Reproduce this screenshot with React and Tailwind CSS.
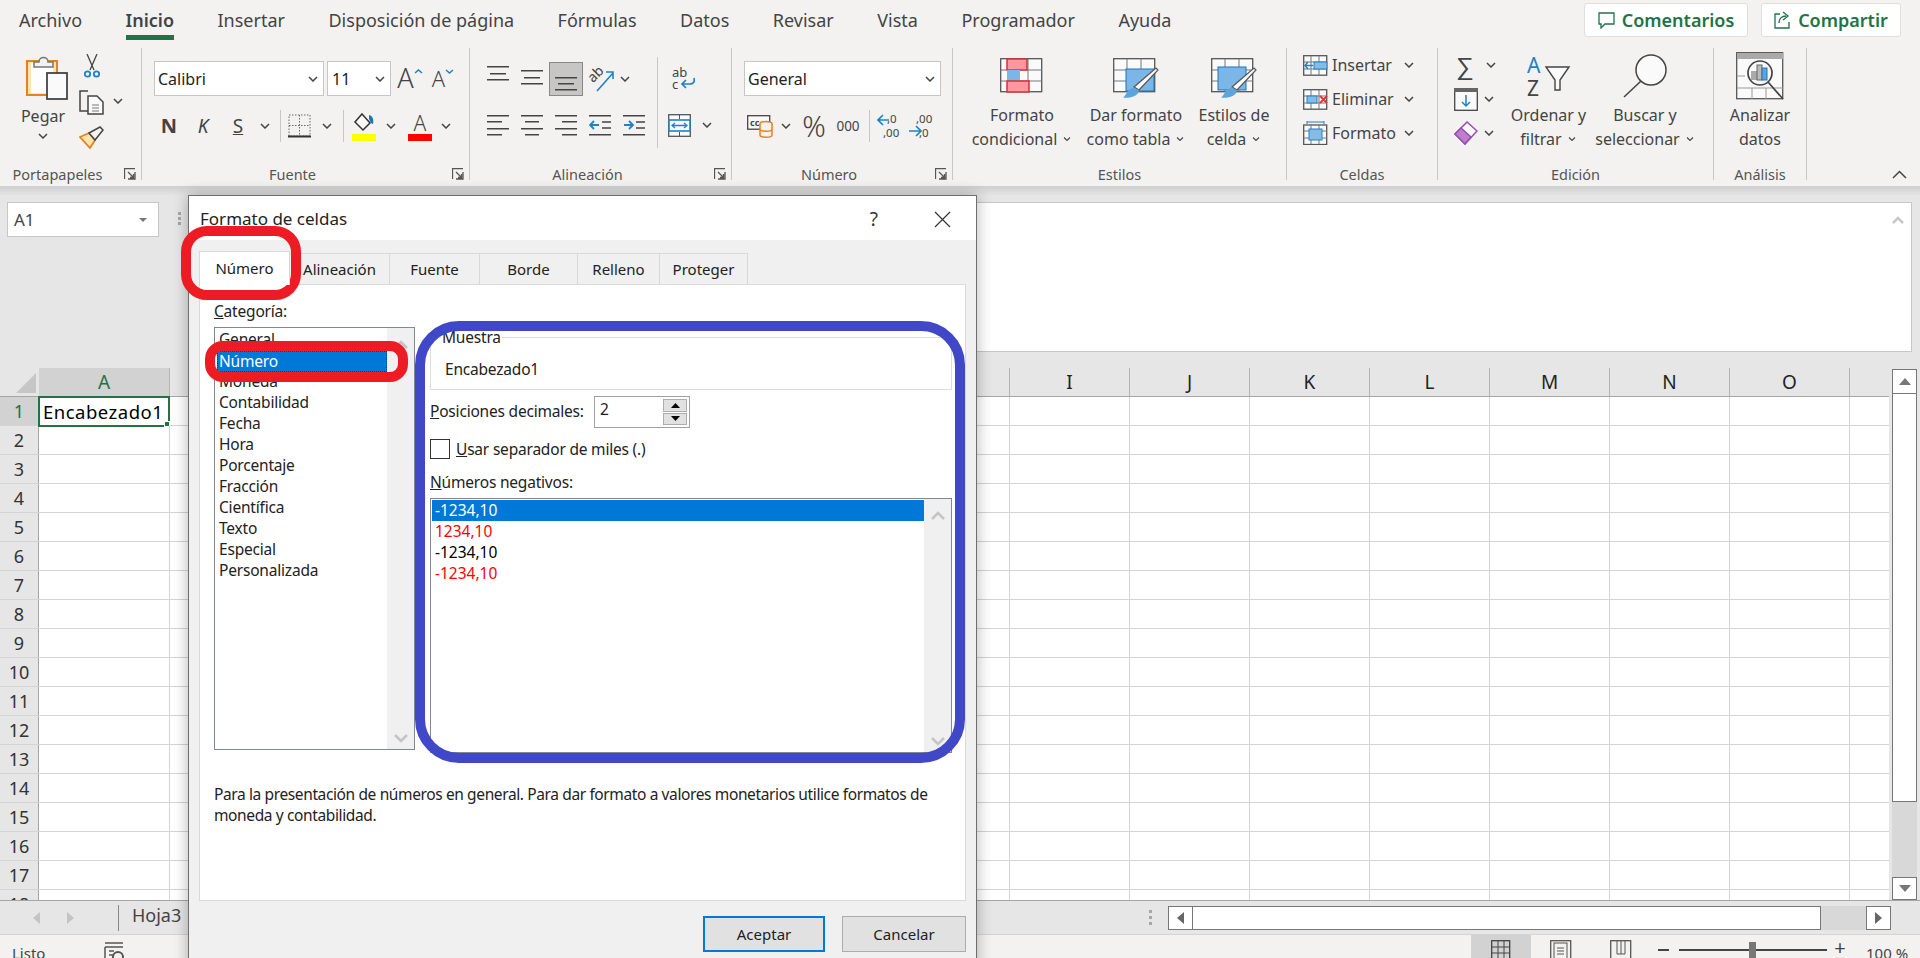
import React from 'react';

const Chev = ({ className = '' }) => (
  <svg width="10" height="6" viewBox="0 0 10 6" className={className}><path d="M1 1l4 4 4-4" fill="none" stroke="#444" strokeWidth="1.5" /></svg>
);

const Launcher = ({ className = '' }) => (
  <svg width="12" height="12" viewBox="0 0 12 12" className={`absolute ${className}`}>
    <path d="M.5 11V.5H11M11 4v7H4M4 4l5.5 5.5M9.5 6v3.500H6" fill="none" stroke="#555" strokeWidth="1.300" />
  </svg>
);

const Lines = ({ rows, w = 22, h = 34, color = '#444' }) => (
  <svg width={w} height={h} viewBox={`0 0 ${w} ${h}`}>
    {rows.map((r, i) => <rect key={i} x={r[0]} y={r[2]} width={r[1] - r[0]} height="1.500" fill={color} />)}
  </svg>
);

const Paste = () => (
  <svg width="42" height="46" viewBox="0 0 42 46">
    <rect x="1" y="7" width="30" height="34" fill="#fce4b0" stroke="#e8811a" strokeWidth="2" />
    <rect x="5" y="9" width="22" height="30" fill="#fdfdfd" />
    <path d="M8 13V8h5c0-6 9-6 9 0h5v5z" fill="#f2f2f2" stroke="#777" strokeWidth="1.500" />
    <rect x="21" y="19" width="20" height="26" fill="#fafafa" stroke="#444" strokeWidth="1.800" />
  </svg>
);

const Scissors = () => (
  <svg width="16" height="25" viewBox="0 0 16 25">
    <path d="M3 0l7 16M13 0L6 16" stroke="#444" strokeWidth="1.300" fill="none" />
    <circle cx="3.500" cy="20" r="2.700" fill="none" stroke="#1c84c6" strokeWidth="1.800" />
    <circle cx="12.500" cy="20" r="2.700" fill="none" stroke="#1c84c6" strokeWidth="1.800" />
  </svg>
);

const Copy = () => (
  <svg width="25" height="25" viewBox="0 0 25 25">
    <path d="M9 1H1v20h8" fill="none" stroke="#444" strokeWidth="1.500" />
    <path d="M9 6h9l6 6v12H9z" fill="#fafafa" stroke="#444" strokeWidth="1.500" />
    <path d="M13 15h7M13 18h7M13 21h7" stroke="#777" strokeWidth="1.200" />
  </svg>
);

const Brush = () => (
  <svg width="25" height="23" viewBox="0 0 25 23">
    <path d="M1 11l9-4 6 7-5 8z" fill="#fce4b0" stroke="#e8811a" strokeWidth="1.800" />
    <path d="M10 7l6 7 8-10-3-3z" fill="#f3f2f1" stroke="#444" strokeWidth="1.500" />
  </svg>
);

const BorderIcon = () => (
  <svg width="24" height="24" viewBox="0 0 24 24">
    <rect x="1" y="1" width="21" height="21" fill="none" stroke="#666" strokeWidth="1" strokeDasharray="1.500 1.500" />
    <path d="M11.500 1v21M1 11.500h21" stroke="#666" strokeWidth="1" strokeDasharray="1.500 1.500" />
    <rect x="0" y="21.500" width="23" height="2" fill="#333" />
  </svg>
);

const FillIcon = () => (
  <svg width="26" height="29" viewBox="0 0 26 29">
    <path d="M11 2l8 9-7 7-8-8z" fill="#fafafa" stroke="#333" strokeWidth="1.500" />
    <path d="M18 3c4 1 5 5 4 9-2 0-3-3-4-5z" fill="#1c74b8" />
    <rect x="1" y="22" width="24" height="7" fill="#ffff00" />
  </svg>
);

const Orientation = () => (
  <svg width="26" height="25" viewBox="0 0 26 25">
    <text x="0" y="13" fontSize="14" fill="#444" transform="rotate(-45 6 10)" fontFamily="Noto Sans">ab</text>
    <path d="M8 24L24 6M17 5h7v7" fill="none" stroke="#1c84c6" strokeWidth="1.600" />
  </svg>
);

const Indent = ({ right }) => (
  <svg width="22" height="21" viewBox="0 0 22 21">
    <rect y="0" width="22" height="1.500" fill="#444" />
    <rect y="19" width="22" height="1.500" fill="#444" />
    <path d="M13 7h9M13 13h9" stroke="#444" strokeWidth="1.500" />
    <path d={right ? 'M1 10h9M6 6l4 4-4 4' : 'M10 10H1M5 6l-4 4 4 4'} fill="none" stroke="#1c84c6" strokeWidth="1.800" />
  </svg>
);

const Wrap = () => (
  <svg width="23" height="24" viewBox="0 0 23 24">
    <text x="0" y="10" fontSize="13" fill="#444" fontFamily="Noto Sans">ab</text>
    <text x="0" y="22" fontSize="13" fill="#444" fontFamily="Noto Sans">c</text>
    <path d="M22 11c1 4-1 6-4 6H10M14 13l-4 4 4 4" fill="none" stroke="#1c84c6" strokeWidth="1.700" />
  </svg>
);

const Merge = () => (
  <svg width="23" height="23" viewBox="0 0 23 23">
    <rect x=".7" y=".7" width="21.600" height="21.600" fill="#fafafa" stroke="#555" strokeWidth="1.300" />
    <path d="M11.500 0v5M11.500 18v5" stroke="#555" />
    <rect x="1" y="6" width="21" height="11" fill="#fafafa" stroke="#1c84c6" strokeWidth="1.600" />
    <path d="M4 11.500h15M7 9l-3 2.500L7 14M16 9l3 2.500-3 2.500" fill="none" stroke="#1c84c6" strokeWidth="1.300" />
  </svg>
);

const Currency = () => (
  <svg width="26" height="24" viewBox="0 0 26 24">
    <rect x=".7" y="1.700" width="22" height="13.500" fill="#fafafa" stroke="#444" strokeWidth="1.300" />
    <text x="3" y="12" fontSize="9" fontWeight="700" fill="#444" fontFamily="Noto Sans">cc</text>
    <ellipse cx="19" cy="10" rx="6" ry="2.500" fill="#f3f2f1" stroke="#e8811a" strokeWidth="1.500" />
    <path d="M13 10v11c0 3 12 3 12 0V10M13 15c0 3 12 3 12 0" fill="#f3f2f1" stroke="#e8811a" strokeWidth="1.500" />
  </svg>
);

const Decimal = ({ more }) => (
  <svg width="24" height="26" viewBox="0 0 24 26">
    <text x={more ? 7 : 10} y="10" fontSize="11.500" fill="#444" fontFamily="Noto Sans">{more ? ',00' : ',0'}</text>
    <text x={more ? 10 : 6} y="24" fontSize="11.500" fill="#444" fontFamily="Noto Sans">{more ? ',0' : ',00'}</text>
    <path d={more ? 'M0 18h11M7 13l5 5-5 5' : 'M12 7H1M6 2L1 7l5 5'} fill="none" stroke="#1c84c6" strokeWidth="1.700" />
  </svg>
);

const StyleGrid = ({ children, w = 44 }) => (
  <svg width={w} height="40" viewBox={`0 0 ${w} 40`}>
    <rect x=".7" y=".7" width="41" height="33" fill="#fafafa" stroke="#555" strokeWidth="1.300" />
    <path d="M14 1v33M28 1v33M1 12h41M1 23h41" stroke="#777" strokeWidth="1" />
    {children}
  </svg>
);

const Pencil = () => (
  <g>
    <path d="M21 29L43 10l2 2-19 20z" fill="#fafafa" stroke="#555" strokeWidth="1.200" />
    <path d="M10 39.500c3-1 3-8 11-10l5 3c-1 6-9 8-16 7z" fill="#5ea4dc" />
  </g>
);

const Insertar = () => (
  <svg width="25" height="21" viewBox="0 0 25 21">
    <rect x=".7" y=".7" width="23" height="19.500" fill="#fafafa" stroke="#555" strokeWidth="1.300" />
    <path d="M8 1v19M16 1v19M1 7h23M1 14h23" stroke="#777" />
    <rect x="11" y="7" width="13" height="7" fill="#86bbe8" stroke="#1c84c6" />
    <path d="M10 10.500H2M5 7l-3 3.500L5 14" fill="none" stroke="#1c84c6" strokeWidth="1.500" />
  </svg>
);

const Eliminar = () => (
  <svg width="25" height="21" viewBox="0 0 25 21">
    <rect x=".7" y=".7" width="23" height="19.500" fill="#fafafa" stroke="#555" strokeWidth="1.300" />
    <path d="M8 1v19M16 1v19M1 7h23M1 14h23" stroke="#777" />
    <rect x="4" y="7" width="10" height="7" fill="#86bbe8" stroke="#1c84c6" />
    <path d="M17 7l7 7M24 7l-7 7" stroke="#e8303a" strokeWidth="1.800" />
  </svg>
);

const Formato = () => (
  <svg width="25" height="24" viewBox="0 0 25 24">
    <path d="M4 1h17M4 0v3M21 0v3" stroke="#1c84c6" />
    <rect x=".7" y="4" width="23" height="19.500" fill="#fafafa" stroke="#555" strokeWidth="1.300" />
    <path d="M8 4v19M16 4v19M1 10h23M1 17h23" stroke="#777" />
    <rect x="6" y="8" width="13" height="11" fill="#86bbe8" stroke="#1c84c6" />
  </svg>
);

const SortIcon = () => (
  <svg width="44" height="42" viewBox="0 0 44 42">
    <text x="0" y="18" fontSize="21" fill="#1c84c6" fontFamily="Noto Sans">A</text>
    <text x="0" y="41" fontSize="21" fill="#444" fontFamily="Noto Sans">Z</text>
    <path d="M19 12h23l-9 13v10h-5V25z" fill="#fafafa" stroke="#444" strokeWidth="1.400" />
  </svg>
);

const SearchIcon = () => (
  <svg width="44" height="44" viewBox="0 0 44 44">
    <circle cx="28" cy="16" r="15" fill="#fafafa" stroke="#444" strokeWidth="1.500" />
    <path d="M18 27L1 43" stroke="#444" strokeWidth="1.500" />
  </svg>
);

const AnalyzeIcon = () => (
  <svg width="48" height="48" viewBox="0 0 48 48">
    <rect x=".7" y=".7" width="46" height="46" fill="#fafafa" stroke="#555" strokeWidth="1.300" />
    <rect x="1" y="1" width="46" height="6" fill="#aaa" />
    <path d="M1 24h8M1 36h46M16 36v11M30 36v11" stroke="#999" />
    <circle cx="24" cy="21" r="12" fill="#fafafa" stroke="#444" strokeWidth="1.700" />
    <rect x="15" y="19" width="6" height="9" fill="#aaa" />
    <rect x="21" y="13" width="5" height="15" fill="#bbb" stroke="#666" />
    <rect x="26" y="16" width="5" height="12" fill="#5ea4dc" stroke="#1c74b8" />
    <path d="M32 30l15 17" stroke="#444" strokeWidth="1.700" />
  </svg>
);

const Group = ({ width, label, launcher, children, noBorder }) => (
  <div className={`relative flex h-[132px] shrink-0 flex-col ${noBorder ? '' : 'border-r border-[#c8c6c4]'}`} style={{ width }}>
    <div className="h-[117px] shrink-0 overflow-hidden">{children}</div>
    <div className={`h-[18px] shrink-0 text-center text-[14.5px] leading-[18px] text-[#555] ${launcher ? 'pr-[26px]' : ''}`}>{label}</div>
    {launcher && <Launcher className="right-[5px] bottom-[0px]" />}
  </div>
);

const Cell = ({ w, children, className = '' }) => (
  <div className={`flex h-[34px] shrink-0 items-center justify-center ${className}`} style={{ width: w }}>{children}</div>
);

const VSep = () => <div className="mx-auto h-[32px] w-px bg-[#c8c6c4]" />;

const Select = ({ w, label, pad = 'pl-[3px]' }) => (
  <div className={`flex h-[35px] shrink-0 items-center justify-between border border-[#c8c6c4] bg-white pr-[5px] text-[16px] text-[#222] ${pad}`} style={{ width: w }}>
    <span>{label}</span>
    <Chev />
  </div>
);

const BigButton = ({ w, icon, lines, top = 'pt-[10px]' }) => (
  <div className="flex shrink-0 flex-col items-center" style={{ width: w }}>
    <div className={`flex h-[55px] items-start justify-center ${top}`}>{icon}</div>
    <div className="text-center text-[16px] leading-[24px] whitespace-nowrap text-[#444]">
      {lines.map((l, i) => (
        <div key={i} className="flex items-center justify-center gap-[5px]">
          <span>{l.replace(' *', '')}</span>
          {l.endsWith(' *') && <Chev className="scale-75" />}
        </div>
      ))}
    </div>
  </div>
);

const CellRow = ({ icon, label }) => (
  <div className="flex h-[34px] items-center text-[16px] text-[#444]">
    <div className="flex w-[29px] shrink-0 items-center">{icon}</div>
    <span className="w-[72px]">{label}</span>
    <Chev />
  </div>
);

const Ribbon = () => (
  <div className="flex h-[146px] shrink-0 items-start bg-[#f3f2f1] pt-[8px]">
    <Group width={142} label="Portapapeles" launcher>
      <div className="flex pl-[8px]">
        <div className="flex w-[70px] flex-col pt-[6px]">
          <div className="pl-[18px]"><Paste /></div>
          <div className="mt-[4px] w-[70px] text-center text-[16px] leading-[24px] text-[#444]">Pegar</div>
          <div className="flex h-[16px] w-[70px] items-center justify-center"><Chev /></div>
        </div>
        <div className="flex flex-col pl-[1px]">
          <div className="flex h-[31px] items-end pl-[5px]"><Scissors /></div>
          <div className="flex h-[36px] items-end gap-[9px]"><Copy /><Chev className="mb-[11px]" /></div>
          <div className="flex h-[34px] items-end"><Brush /></div>
        </div>
      </div>
    </Group>
    <Group width={328} label="Fuente" launcher>
      <div className="pt-[13px] pl-[12px]">
        <div className="flex items-center">
          <Select w={170} label="Calibri" />
          <div className="w-[3px]" />
          <Select w={64} label="11" pad="pl-[4px]" />
          <div className="flex h-[35px] w-[36px] items-start justify-center pl-[2px] text-[27px] leading-[33px] font-light text-[#444]">
            A
            <svg width="9" height="5" viewBox="0 0 9 5" className="mt-[8px]"><path d="M1 4l3.500-3L8 4" fill="none" stroke="#1c84c6" strokeWidth="1.500" /></svg>
          </div>
          <div className="flex h-[35px] w-[32px] items-start justify-center text-[22px] leading-[35px] font-light text-[#444]">
            A
            <svg width="9" height="5" viewBox="0 0 9 5" className="mt-[8px]"><path d="M1 1l3.500 3L8 1" fill="none" stroke="#1c84c6" strokeWidth="1.500" /></svg>
          </div>
        </div>
        <div className="mt-[13px] -ml-[2px] flex items-center text-[#444]">
          <Cell w={34} className="text-[20px] font-bold">N</Cell>
          <Cell w={34} className="text-[19px] italic">K</Cell>
          <Cell w={36} className="text-[19px] underline">S</Cell>
          <Cell w={17}><Chev /></Cell>
          <Cell w={14}><VSep /></Cell>
          <Cell w={26}><BorderIcon /></Cell>
          <Cell w={5} />
          <Cell w={18}><Chev /></Cell>
          <Cell w={14}><VSep /></Cell>
          <Cell w={28}><FillIcon /></Cell>
          <Cell w={25}><Chev /></Cell>
          <Cell w={34}>
            <div className="flex flex-col items-center">
              <span className="text-[21px] leading-[22px] font-light">A</span>
              <div className="h-[7px] w-[24px] bg-[#ff0000]" />
            </div>
          </Cell>
          <Cell w={18}><Chev /></Cell>
        </div>
      </div>
    </Group>
    <Group width={262} label="Alineación" launcher>
      <div className="flex pt-[14px] pl-[11px]">
        <div className="w-[176px]">
          <div className="flex items-start">
            <Cell w={34}><Lines rows={[[0, 22, 4], [3, 19, 11], [0, 22, 17]]} /></Cell>
            <Cell w={34}><Lines rows={[[0, 22, 8], [3, 19, 15], [0, 22, 21]]} /></Cell>
            <Cell w={34} className="border border-[#8a8886] bg-[#c8c6c4]"><Lines rows={[[0, 22, 15], [3, 19, 21], [0, 22, 27]]} /></Cell>
            <Cell w={38}><Orientation /></Cell>
            <Cell w={10} className="-ml-[1px]"><Chev /></Cell>
          </div>
          <div className="mt-[12px] flex items-center">
            <Cell w={34}><Lines rows={[[0, 22, 7], [0, 15, 13], [0, 22, 20], [0, 15, 26]]} /></Cell>
            <Cell w={34}><Lines rows={[[0, 22, 7], [4, 18, 13], [0, 22, 20], [4, 18, 26]]} /></Cell>
            <Cell w={34}><Lines rows={[[0, 22, 7], [7, 22, 13], [0, 22, 20], [7, 22, 26]]} /></Cell>
            <Cell w={34}><Indent /></Cell>
            <Cell w={34}><Indent right /></Cell>
          </div>
        </div>
        <div className="-mt-[5px] h-[91px] w-px bg-[#c8c6c4]" />
        <div className="flex flex-col pl-[10px]">
          <div className="flex h-[34px] items-center pl-[4px]"><Wrap /></div>
          <div className="mt-[12px] flex h-[34px] items-center gap-[11px]"><Merge /><Chev /></div>
        </div>
      </div>
    </Group>
    <Group width={221} label="Número" launcher>
      <div className="pt-[13px] pl-[12px]">
        <Select w={197} label="General" />
        <div className="mt-[13px] flex items-center">
          <Cell w={31}><Currency /></Cell>
          <Cell w={22}><Chev /></Cell>
          <Cell w={34} className="text-[29px] font-light text-[#444]">%</Cell>
          <Cell w={34} className="text-[13.500px] text-[#444]">000</Cell>
          <Cell w={9}><VSep /></Cell>
          <Cell w={30}><Decimal /></Cell>
          <Cell w={33}><Decimal more /></Cell>
        </div>
      </div>
    </Group>
    <Group width={334} label="Estilos">
      <div className="flex pl-[17px]">
        <BigButton w={104} icon={<StyleGrid><rect x="7" y="1" width="20" height="11" fill="#ff97a0" stroke="#d13438" strokeWidth="1.500" /><rect x="7" y="12" width="13" height="11" fill="#7cb6e6" /><rect x="7" y="23" width="22" height="11" fill="#ff97a0" stroke="#d13438" strokeWidth="1.500" /></StyleGrid>} lines={['Formato', 'condicional *']} />
        <BigButton w={124} icon={<StyleGrid w={46}><rect x="13" y="11" width="28" height="22" fill="#7cb6e6" stroke="#1c74b8" /><Pencil /></StyleGrid>} lines={['Dar formato', 'como tabla *']} />
        <BigButton w={72} icon={<StyleGrid w={46}><rect x="7" y="9" width="28" height="23" fill="#7cb6e6" stroke="#1c74b8" /><Pencil /></StyleGrid>} lines={['Estilos de', 'celda *']} />
      </div>
    </Group>
    <Group width={151} label="Celdas">
      <div className="flex flex-col pl-[16px]">
        <CellRow icon={<Insertar />} label="Insertar" />
        <CellRow icon={<Eliminar />} label="Eliminar" />
        <CellRow icon={<Formato />} label="Formato" />
      </div>
    </Group>
    <Group width={276} label="Edición">
      <div className="flex">
        <div className="flex w-[68px] shrink-0 flex-col pl-[16px]">
          <div className="flex h-[34px] items-center gap-[12px] pl-[2px] text-[25px] leading-none text-[#444]"><span className="w-[18px]">∑</span><Chev /></div>
          <div className="flex h-[34px] items-center gap-[6px]">
            <svg width="24" height="23" viewBox="0 0 24 23"><rect x=".7" y=".7" width="22.600" height="21.600" fill="#fafafa" stroke="#444" strokeWidth="1.300" /><rect y="0" width="24" height="4" fill="#666" /><path d="M12 7v11M8 14l4 4 4-4" fill="none" stroke="#1c84c6" strokeWidth="1.500" /></svg>
            <Chev />
          </div>
          <div className="flex h-[34px] items-center gap-[6px]">
            <svg width="24" height="24" viewBox="0 0 24 24"><path d="M1 13L13 1l10 9-12 13z" fill="#fafafa" stroke="#9a4bb0" strokeWidth="1.500" /><path d="M1 13l6-6 10 9-6 7z" fill="#bb7fcc" stroke="#9a4bb0" strokeWidth="1.500" /></svg>
            <Chev />
          </div>
        </div>
        <BigButton w={85} icon={<SortIcon />} lines={['Ordenar y', 'filtrar *']} top="pt-[7px]" />
        <BigButton w={108} icon={<SearchIcon />} lines={['Buscar y', 'seleccionar *']} top="pt-[6px]" />
      </div>
    </Group>
    <Group width={93} label="Análisis">
      <BigButton w={92} icon={<AnalyzeIcon />} lines={['Analizar', 'datos']} top="pt-[4px]" />
    </Group>
    <div className="flex h-[132px] flex-1 items-end justify-end pr-[13px] pb-[1px]">
      <svg width="15" height="9" viewBox="0 0 15 9"><path d="M1 8l6.500-6.500L14 8" fill="none" stroke="#444" strokeWidth="1.500" /></svg>
    </div>
  </div>
);

const COLS = ['A', 'B', 'C', 'D', 'E', 'F', 'G', 'H', 'I', 'J', 'K', 'L', 'M', 'N', 'O'];
const ROWS = Array.from({ length: 18 }, (_, i) => i + 1);

const Sheet = () => (
  <div className="flex h-[532px] shrink-0 bg-[#e6e6e6]">
    <div className="flex w-[1889px] flex-col overflow-hidden">
      <div className="flex h-[28px] shrink-0">
        <div className="flex h-[28px] w-[39px] shrink-0 items-end justify-end pr-[3px] pb-[3px]">
          <svg width="20" height="20" viewBox="0 0 20 20"><path d="M20 0v20H0z" fill="#c6c6c6" /></svg>
        </div>
        {COLS.map((c, i) => (
          <div key={c} className={`flex shrink-0 items-center justify-center border-r border-[#b4b4b4] text-[19px] ${i === 0 ? 'w-[131px] bg-[#d2d2d2] text-[#217346]' : 'w-[120px] text-[#222]'}`}>{c}</div>
        ))}
      </div>
      <div className="flex-1 border-t border-[#a6a6a6]">
        {ROWS.map((r) => (
          <div key={r} className="flex h-[29px] shrink-0 border-b border-[#d4d4d4]">
            <div className={`flex w-[39px] shrink-0 items-center justify-center border-r border-[#a6a6a6] text-[18px] ${r === 1 ? 'bg-[#d2d2d2] text-[#217346]' : 'bg-[#e6e6e6] text-[#333]'}`}>{r}</div>
            <div className="flex flex-1 bg-white">
              {COLS.map((c, i) => (
                <div key={c} className={`relative shrink-0 border-r border-[#d4d4d4] ${i === 0 ? 'w-[131px]' : 'w-[120px]'}`}>
                  {r === 1 && i === 0 && (
                    <div className="absolute -top-[1px] -left-[1px] flex h-[31px] w-[132px] items-center border-2 border-[#217346] pl-[3px] text-[18.500px] tracking-[0.5px] text-black">
                      Encabezado1
                      <div className="absolute -right-[2px] -bottom-[2px] h-[6px] w-[6px] border border-white bg-[#217346]" />
                    </div>
                  )}
                </div>
              ))}
            </div>
          </div>
        ))}
      </div>
    </div>
    <div className="ml-[3px] flex w-[25px] flex-col pt-[1px]">
      <div className="flex h-[25px] items-center justify-center border border-[#777] bg-white">
        <svg width="12" height="7" viewBox="0 0 12 7"><path d="M6 0l6 7H0z" fill="#777" /></svg>
      </div>
      <div className="h-[409px] border-x border-b border-[#777] bg-white" />
      <div className="h-[75px] bg-[#d8d8d8]" />
      <div className="flex h-[23px] items-center justify-center border border-[#777] bg-white">
        <svg width="12" height="7" viewBox="0 0 12 7"><path d="M6 7l6-7H0z" fill="#777" /></svg>
      </div>
    </div>
  </div>
);

const SheetBar = () => (
  <div className="flex h-[34px] shrink-0 items-center border-t border-[#a6a6a6] bg-[#e6e6e6]">
    <div className="flex w-[118px] items-center justify-center gap-[27px] pr-[12px]">
      <svg width="7" height="12" viewBox="0 0 7 12"><path d="M7 0L0 6l7 6z" fill="#c4c4c4" /></svg>
      <svg width="7" height="12" viewBox="0 0 7 12"><path d="M0 0l7 6-7 6z" fill="#c4c4c4" /></svg>
    </div>
    <div className="h-[26px] w-px bg-[#888]" />
    <div className="pb-[4px] pl-[13px] text-[18px] text-[#444]">Hoja3</div>
    <div className="flex-1" />
    <div className="mr-[16px] flex flex-col gap-[3px]">
      <div className="h-[3px] w-[3px] bg-[#a6a6a6]" /><div className="h-[3px] w-[3px] bg-[#a6a6a6]" /><div className="h-[3px] w-[3px] bg-[#a6a6a6]" />
    </div>
    <div className="flex h-[24px] w-[723px] items-stretch">
      <div className="flex w-[25px] items-center justify-center border border-[#777] bg-white">
        <svg width="7" height="12" viewBox="0 0 7 12"><path d="M7 0L0 6l7 6z" fill="#666" /></svg>
      </div>
      <div className="w-[628px] border-y border-r border-[#777] bg-white" />
      <div className="w-[45px] bg-[#d8d8d8]" />
      <div className="flex w-[25px] items-center justify-center border border-[#777] bg-white">
        <svg width="7" height="12" viewBox="0 0 7 12"><path d="M0 0l7 6-7 6z" fill="#666" /></svg>
      </div>
    </div>
    <div className="w-[29px]" />
  </div>
);

const StatusBar = () => (
  <div className="flex h-[24px] shrink-0 items-start overflow-hidden border-t border-[#d4d4d4] bg-[#f3f2f1] text-[#444]">
    <div className="w-[104px] pt-[7px] pl-[12px] text-[15px] leading-[22px]">Listo</div>
    <div className="pt-[7px]">
      <svg width="22" height="24" viewBox="0 0 22 24"><path d="M1 1h18M1 5h18M1 5v14M5 9h5M5 13h5" stroke="#555" strokeWidth="1.500" fill="none" /><circle cx="14" cy="15" r="5" fill="none" stroke="#555" strokeWidth="2" /></svg>
    </div>
    <div className="flex-1" />
    <div className="flex h-[24px] w-[60px] items-start justify-center bg-[#d2d2d2] pt-[5px]">
      <svg width="20" height="24" viewBox="0 0 20 24"><rect x=".7" y=".7" width="18" height="22" fill="none" stroke="#444" strokeWidth="1.300" /><path d="M7 1v22M13 1v22M1 7h18M1 13h18" stroke="#444" /></svg>
    </div>
    <div className="flex h-[24px] w-[60px] items-start justify-center pt-[5px]">
      <svg width="22" height="24" viewBox="0 0 22 24"><rect x=".7" y=".7" width="20" height="22" fill="none" stroke="#555" strokeWidth="1.300" /><rect x="4" y="3" width="13" height="20" fill="none" stroke="#555" /><path d="M7 8h7M7 11h7M7 14h7" stroke="#555" /></svg>
    </div>
    <div className="flex h-[24px] w-[60px] items-start justify-center pt-[5px]">
      <svg width="22" height="24" viewBox="0 0 22 24"><rect x=".7" y=".7" width="20" height="22" fill="none" stroke="#555" strokeWidth="1.300" /><path d="M7 1v13h4V1M11 14h4V1" fill="none" stroke="#555" /></svg>
    </div>
    <div className="ml-[7px] flex h-[24px] items-start pt-[14px]">
      <div className="h-[1.500px] w-[11px] bg-[#444]" />
    </div>
    <div className="relative ml-[10px] flex h-[24px] w-[148px] items-start pt-[14px]">
      <div className="h-[2px] w-full bg-[#444]" />
      <div className="absolute top-[7px] left-[70px] h-[17px] w-[7px] bg-[#777]" />
    </div>
    <div className="ml-[7px] w-[12px] pt-[1px] text-center text-[20px] leading-[24px]">+</div>
    <div className="ml-[20px] w-[54px] pt-[7px] text-[15px] leading-[22px]">100 %</div>
  </div>
);

const TABS = ['Alineación', 'Fuente', 'Borde', 'Relleno', 'Proteger'];
const TAB_W = ['w-[100px]', 'w-[90px]', 'w-[98px]', 'w-[82px]', 'w-[88px]'];
const CATEGORIES = ['General', 'Número', 'Moneda', 'Contabilidad', 'Fecha', 'Hora', 'Porcentaje', 'Fracción', 'Científica', 'Texto', 'Especial', 'Personalizada'];
const NEG = [['-1234,10', 'text-white bg-[#0078d7]'], ['1234,10', 'text-[#ff0000]'], ['-1234,10', 'text-black'], ['-1234,10', 'text-[#ff0000]']];

const ScrollCol = ({ w }) => (
  <div className={`flex h-full shrink-0 flex-col items-center justify-between bg-[#f0f0f0] pt-[12px] pb-[6px] ${w}`}>
    <svg width="14" height="9" viewBox="0 0 14 9"><path d="M1 8l6-6 6 6" fill="none" stroke="#c4c4c4" strokeWidth="2.500" /></svg>
    <svg width="14" height="9" viewBox="0 0 14 9"><path d="M1 1l6 6 6-6" fill="none" stroke="#c4c4c4" strokeWidth="2.500" /></svg>
  </div>
);

const Dialog = () => (
  <div className="absolute top-[195px] left-[188px] flex h-[800px] w-[789px] flex-col border border-[#6e6e6e] bg-[#f0f0f0] shadow-[0_0_14px_rgba(0,0,0,0.3)]">
    <div className="flex h-[44px] shrink-0 items-center bg-white pt-[2px] pl-[11px] text-[17px] text-[#222]">
      <span className="flex-1">Formato de celdas</span>
      <span className="mr-[56px] text-[19px] text-[#333]">?</span>
      <svg width="17" height="17" viewBox="0 0 17 17" className="mr-[25px]"><path d="M1 1l15 15M16 1L1 16" stroke="#333" strokeWidth="1.200" /></svg>
    </div>
    <div className="flex h-[44px] shrink-0 items-end pl-[10px] text-[15px] text-[#222]">
      <div className="z-10 -mb-px flex h-[34px] w-[91px] items-center justify-center border-x border-t border-[#d9d9d9] bg-white">Número</div>
      {TABS.map((t, i) => (
        <div key={t} className={`flex h-[31px] items-center justify-center border-t border-r border-[#d9d9d9] bg-[#f0f0f0] ${TAB_W[i]}`}>{t}</div>
      ))}
    </div>
    <div className="mx-[10px] flex h-[617px] w-[767px] shrink-0 flex-col border border-[#d9d9d9] bg-white pl-[14px] text-[15.500px] tracking-[-0.2px] text-[#222]">
      <div className="flex h-[468px] shrink-0">
        <div className="w-[201px] shrink-0 pt-[17px]">
          <div className="h-[25px] leading-[18px]"><span className="underline">C</span>ategoría:</div>
          <div className="flex h-[423px] border border-[#828790]">
            <div className="flex-1 pt-[2px] pl-[2px] leading-[19px]">
              {CATEGORIES.map((c, i) => (
                <div key={c} className={`h-[21px] ${i === 1 ? 'border border-dotted border-[#333] bg-[#0078d7] pl-px text-white' : 'pl-[2px]'}`}>{c}</div>
              ))}
            </div>
            <ScrollCol w="w-[27px]" />
          </div>
        </div>
        <div className="ml-[15px] flex w-[522px] shrink-0 flex-col pt-[52px]">
          <div className="relative flex h-[53px] shrink-0 items-center border border-[#dcdcdc] pt-[12px] pl-[14px]">
            <span className="absolute -top-[11px] left-[10px] bg-white px-px leading-[20px]">Muestra</span>
            Encabezado1
          </div>
          <div className="mt-[6px] flex h-[32px] shrink-0 items-center">
            <span className="w-[164px] pb-[1px]"><span className="underline">P</span>osiciones decimales:</span>
            <div className="flex h-[32px] w-[96px] justify-between border border-[#a0a0a0] py-[2px] pr-[2px] pl-[5px]">
              <span className="leading-[20px]">2</span>
              <div className="flex w-[24px] flex-col gap-[1px]">
                <div className="flex h-[13px] items-center justify-center border border-[#adadad] bg-[#e1e1e1]"><svg width="9" height="5" viewBox="0 0 9 5"><path d="M4.500 0L9 5H0z" fill="#000" /></svg></div>
                <div className="flex h-[13px] items-center justify-center border border-[#adadad] bg-[#e1e1e1]"><svg width="9" height="5" viewBox="0 0 9 5"><path d="M4.500 5L9 0H0z" fill="#000" /></svg></div>
              </div>
            </div>
          </div>
          <div className="mt-[11px] flex h-[20px] shrink-0 items-center">
            <div className="h-[20px] w-[20px] border border-[#333]" />
            <span className="ml-[6px] pt-[1px]"><span className="underline">U</span>sar separador de miles (.)</span>
          </div>
          <div className="mt-[14px] h-[25px] shrink-0 leading-[18px]"><span className="underline">N</span>úmeros negativos:</div>
          <div className="flex h-[255px] shrink-0 border border-[#828790]">
            <div className="flex-1 pt-px pl-px leading-[20px] tracking-normal">
              {NEG.map(([t, c], i) => <div key={i} className={`h-[21px] pl-[3px] ${c}`}>{t}</div>)}
            </div>
            <ScrollCol w="w-[27px]" />
          </div>
        </div>
      </div>
      <div className="mt-[31px] leading-[21px] tracking-[-0.38px]">
        Para la presentación de números en general. Para dar formato a valores monetarios utilice formatos de<br />moneda y contabilidad.
      </div>
    </div>
    <div className="mt-[15px] ml-[514px] flex gap-[17px] text-[15px] text-[#222]">
      <div className="flex h-[36px] w-[122px] items-center justify-center border-2 border-[#0078d7] bg-[#e1e1e1]">Aceptar</div>
      <div className="flex h-[36px] w-[124px] items-center justify-center border border-[#adadad] bg-[#e1e1e1]">Cancelar</div>
    </div>
  </div>
);

export default function App() {
  return (
    <div className="relative flex h-[958px] w-[1920px] flex-col overflow-hidden bg-[#e6e6e6] font-['Noto_Sans',sans-serif]">
      {/* Menu tabs */}
      <div className="flex h-[40px] shrink-0 items-start bg-[#f3f2f1] pl-[19px] text-[18px] text-[#444]">
        <div className="flex h-[40px] items-center gap-[43.500px]">
          <span>Archivo</span>
          <span className="relative flex h-[40px] items-center font-semibold">Inicio<span className="absolute right-0 bottom-0 left-0 h-[5px] bg-[#217346]" /></span>
          <span>Insertar</span>
          <span>Disposición de página</span>
          <span>Fórmulas</span>
          <span>Datos</span>
          <span>Revisar</span>
          <span>Vista</span>
          <span>Programador</span>
          <span>Ayuda</span>
        </div>
        <div className="flex-1" />
        <div className="flex gap-[13px] pt-[3px] pr-[19px] text-[18px] font-semibold text-[#217346]">
          <div className="flex h-[34px] w-[164px] items-center justify-center gap-[7px] rounded-[3px] border border-[#e1dfdd] bg-white">
            <svg width="17" height="17" viewBox="0 0 17 17"><path d="M1 1h15v11H7l-4 4v-4H1z" fill="none" stroke="#217346" strokeWidth="1.300" /></svg>
            Comentarios
          </div>
          <div className="flex h-[34px] w-[140px] items-center justify-center gap-[7px] rounded-[3px] border border-[#e1dfdd] bg-white">
            <svg width="17" height="18" viewBox="0 0 17 18"><path d="M6 3H1v14h14v-6M5 12c0-5 3-7 7-7M9 1l5 4-5 4" fill="none" stroke="#217346" strokeWidth="1.300" /></svg>
            Compartir
          </div>
        </div>
      </div>
      <Ribbon />
      {/* Formula bar */}
      <div className="h-[10px] shrink-0 bg-gradient-to-b from-[#cfcfcf] to-[#e6e6e6]" />
      <div className="flex h-[172px] shrink-0 items-start pt-[6px] pr-[8px] pl-[7px]">
        <div className="flex h-[35px] w-[152px] items-center justify-between border border-[#c8c6c4] bg-white pr-[11px] pl-[6px] text-[17px] text-[#444]">
          A1
          <svg width="8" height="4" viewBox="0 0 8 4"><path d="M0 0h8L4 4z" fill="#777" /></svg>
        </div>
        <div className="mt-[10px] ml-[19px] flex flex-col gap-[2px]">
          <div className="h-[3px] w-[3px] bg-[#a6a6a6]" /><div className="h-[3px] w-[3px] bg-[#a6a6a6]" /><div className="h-[3px] w-[3px] bg-[#a6a6a6]" />
        </div>
        <div className="ml-[14px] flex h-[150px] flex-1 justify-end border border-[#c6c6c6] bg-white pt-[13px] pr-[7px]">
          <svg width="12" height="8" viewBox="0 0 12 8"><path d="M1 7l5-5 5 5" fill="none" stroke="#c8c8c8" strokeWidth="2.500" /></svg>
        </div>
      </div>
      <Sheet />
      <SheetBar />
      <StatusBar />
      <Dialog />
      {/* Hand-drawn annotations over the dialog */}
      <div className="absolute top-[226px] left-[181px] h-[74px] w-[120px] rounded-[26px] border-[10px] border-[#ed1c24]" />
      <div className="absolute top-[341px] left-[205px] h-[41px] w-[203px] rounded-[18px] border-[10px] border-[#ed1c24]" />
      <div className="absolute top-[321px] left-[415px] h-[442px] w-[550px] rounded-[44px] border-[10px] border-[#4048c8]" />
    </div>
  );
}
